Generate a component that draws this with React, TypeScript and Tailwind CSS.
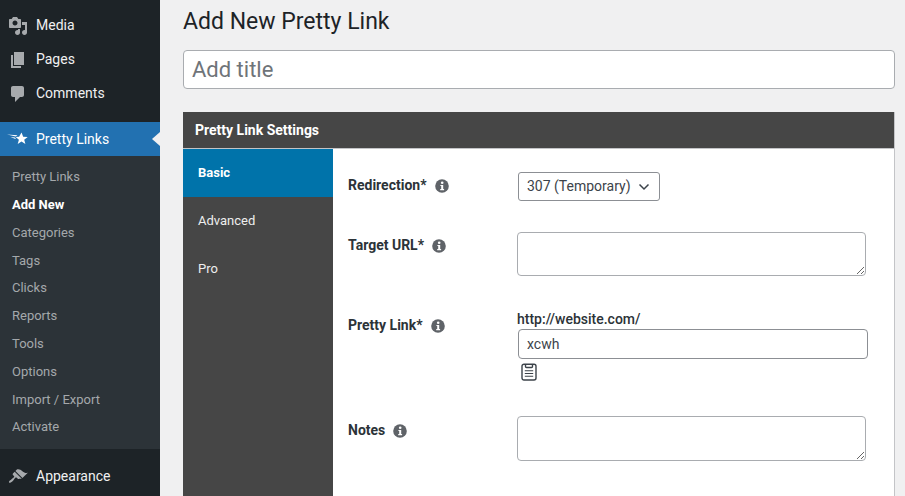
import * as React from 'react'
import type { ReactNode } from 'react'

const InfoIcon = () => (
    <svg viewBox="0 0 14 14" className="h-[14px] w-[14px] shrink-0">
        <circle cx="7" cy="7" r="6.8" fill="#5f6368" />
        <circle cx="7.200" cy="3.700" r="1.300" fill="#fff" />
        <path d="M5.400 6h2.800v4.100h.9v1.100H5.200v-1.100h1V7.100h-.8z" fill="#fff" />
    </svg>
)

const MediaIcon = () => (
    <svg viewBox="0 0 20 20" className="h-5 w-5" fill="#a7aaad">
        <path d="M13 11V4c0-.55-.45-1-1-1h-1.670L9 1H5L3.670 3H2c-.55 0-1 .45-1 1v7c0 .55.45 1 1 1h10c.55 0 1-.45 1-1zM7 4.500c1.380 0 2.500 1.120 2.500 2.500S8.380 9.500 7 9.500 4.500 8.380 4.500 7 5.620 4.500 7 4.500zM14 6h5v10.500c0 1.380-1.120 2.500-2.500 2.500S14 17.880 14 16.500s1.120-2.500 2.500-2.500c.17 0 .34.020.5.050V9h-3V6zm-4 8.050V13h2v3.500c0 1.380-1.120 2.500-2.500 2.500S7 17.880 7 16.500 8.120 14 9.500 14c.17 0 .34.020.5.050z" />
    </svg>
)

const PagesIcon = () => (
    <svg viewBox="0 0 20 20" className="h-5 w-5" fill="#a7aaad">
        <path d="M6 15V2h10v13H6zm-1 1h8v2H3V5h2v11z" />
    </svg>
)

const CommentsIcon = () => (
    <svg viewBox="0 0 20 20" className="h-5 w-5" fill="#a7aaad">
        <path d="M5 2h9c1.100 0 2 .9 2 2v7c0 1.100-.9 2-2 2h-2l-5 5v-5H5c-1.100 0-2-.9-2-2V4c0-1.100.9-2 2-2z" />
    </svg>
)

const PrettyLinksIcon = () => (
    <svg viewBox="0 0 22 14" className="h-[14px] w-[22px]" fill="#fff">
        <path d="M14.500.5l1.700 4.200 4.500.2-3.500 2.800 1.200 4.400-3.900-2.500-3.800 2.500 1.200-4.400L8.700 5l3.400-.2z" />
        <path d="M0 2.500l10.500.8-1.700 1.200zM3.500 5l4.400.4.800.9-.2.800z" />
    </svg>
)

const AppearanceIcon = () => (
    <svg viewBox="0 0 20 20" className="h-5 w-5" fill="#a7aaad">
        <path d="M14.480 11.060L7.410 3.990l1.500-1.500c.5-.56 2.300-.47 3.510.32 1.210.8 1.430 1.280 2.910 2.100 1.180.64 2.450 1.260 4.450.85zm-.71.71L6.700 4.700 4.930 6.470c-.39.39-.39 1.020 0 1.410l1.060 1.060c.39.39.39 1.030 0 1.420-.6.6-1.430 1.110-2.210 1.690-.35.26-.7.53-1.010.84C1.430 13.230.5 15 1.090 15.590c.59.59 2.360-.34 3.700-1.680.31-.31.58-.66.84-1.010.58-.78 1.090-1.610 1.690-2.210.39-.39 1.030-.39 1.420 0l1.060 1.060c.39.39 1.020.39 1.410 0z" />
    </svg>
)

const ClipboardIcon = () => (
    <svg viewBox="0 0 16 18" className="h-[18px] w-4" fill="none" stroke="#3c434a" strokeWidth="1.400">
        <rect x="1" y="1.200" width="14" height="15.800" rx="2" />
        <path d="M4.500 1.200v2.300a1 1 0 0 0 1 1h5a1 1 0 0 0 1-1V1.200" />
        <path d="M3.800 7.800h8.400M3.800 10.500h8.400M3.800 13.200h8.400" strokeWidth="1.100" />
    </svg>
)

const MenuRow = ({ icon, label }: { icon: ReactNode; label: string }) => (
    <div className="flex h-[34px] items-center text-[14px] text-[#f0f0f1]">
        <span className="flex w-[36px] justify-center">{icon}</span>
        <span>{label}</span>
    </div>
)

const SUBMENU = ['Pretty Links', 'Add New', 'Categories', 'Tags', 'Clicks', 'Reports', 'Tools', 'Options', 'Import / Export', 'Activate']

const Label = ({ text }: { text: string }) => (
    <div className="flex w-[170px] shrink-0 items-center gap-[8px] text-[14px] font-bold text-[#2c3338]">
        <span>{text}</span>
        <InfoIcon />
    </div>
)

export default function App() {
    return (
        <div className="flex h-[496px] w-[905px] overflow-hidden bg-[#f0f0f1] font-['Roboto',sans-serif]">
            {/* admin menu */}
            <aside className="flex w-[160px] shrink-0 flex-col bg-[#1d2327] pt-[8.500px]">
                <MenuRow icon={<MediaIcon />} label="Media" />
                <MenuRow icon={<PagesIcon />} label="Pages" />
                <MenuRow icon={<CommentsIcon />} label="Comments" />
                <div className="relative mt-[11.500px] flex h-[34px] items-center bg-[#2271b1] text-[14px] text-white">
                    <span className="flex w-[36px] justify-center">
                        <PrettyLinksIcon />
                    </span>
                    <span>Pretty Links</span>
                    <span className="absolute right-0 top-[10px] h-0 w-0 border-y-[7px] border-r-[8px] border-y-transparent border-r-[#f0f0f1]" />
                </div>
                <div className="bg-[#2c3338] pb-[8px] pt-[7px]">
                    {SUBMENU.map((item) => (
                        <div
                            key={item}
                            className={
                                item === 'Add New'
                                    ? 'flex h-[27.800px] items-center pl-3 text-[13px] font-bold text-white'
                                    : 'flex h-[27.800px] items-center pl-3 text-[13px] text-[#a4a8ab]'
                            }
                        >
                            {item}
                        </div>
                    ))}
                </div>
                <div className="pt-[11px]">
                    <MenuRow icon={<AppearanceIcon />} label="Appearance" />
                </div>
            </aside>

            {/* content */}
            <main className="flex min-w-0 flex-1 flex-col pl-[23px] pr-[10px]">
                <h1 className="mt-[7px] h-[30px] text-[23px] leading-[30px] text-[#1d2327]">Add New Pretty Link</h1>
                <input
                    placeholder="Add title"
                    className="mt-[13px] h-[39px] w-[712px] rounded-[4px] border border-[#a9acb0] bg-white px-[8px] text-[22px] placeholder:text-[#6f7479]"
                />
                <section className="mt-[23px] flex w-[712px] flex-1 flex-col border-r border-[#c3c4c7]">
                    <div className="flex h-[37px] shrink-0 items-center border-b border-[#c3c4c7] bg-[#464646] pl-3 text-[14px] font-bold text-white">
                        Pretty Link Settings
                    </div>
                    <div className="flex flex-1">
                        <div className="w-[150px] shrink-0 bg-[#464646] text-[13px]">
                            <div className="flex h-[48px] items-center bg-[#0073aa] pl-[15px] font-bold text-white">Basic</div>
                            <div className="flex h-[48px] items-center pl-[15px] text-[#eeeeee]">Advanced</div>
                            <div className="flex h-[48px] items-center pl-[15px] text-[#eeeeee]">Pro</div>
                        </div>
                        <div className="flex-1 bg-white pl-[15px] pt-[23px]">
                            <div className="flex h-[29px] items-start">
                                <div className="pt-[3px]">
                                    <Label text="Redirection*" />
                                </div>
                                <div className="flex h-[29px] w-[142px] items-center justify-between rounded-[3px] border border-[#8c8f94] pl-2 pr-[9px] text-[14px] text-[#3c434a]">
                                    <span>307 (Temporary)</span>
                                    <svg viewBox="0 0 12 8" className="h-2 w-3" fill="none" stroke="#3c434a" strokeWidth="1.500">
                                        <path d="M1.500 1.500L6 6l4.500-4.500" />
                                    </svg>
                                </div>
                            </div>

                            <div className="mt-[31px] flex h-[44px] items-start">
                                <div className="pt-[3px]">
                                    <Label text="Target URL*" />
                                </div>
                                <textarea className="ml-[-1px] h-[44px] w-[349px] rounded-[4px] border border-[#a9acb0] bg-white" />
                            </div>

                            <div className="mt-[36px] flex items-start">
                                <div className="pt-[3px]">
                                    <Label text="Pretty Link*" />
                                </div>
                                <div className="ml-[-1px]">
                                    <div className="h-[17px] text-[14px] font-medium leading-[15px] text-[#2c3338]">http://website.com/</div>
                                    <input
                                        defaultValue="xcwh"
                                        className="ml-[1px] block h-[30px] w-[350px] rounded-[4px] border border-[#8c8f94] bg-white px-2 text-[14px] text-[#3c434a]"
                                    />
                                    <div className="ml-[4px] mt-[4px]">
                                        <ClipboardIcon />
                                    </div>
                                </div>
                            </div>

                            <div className="mt-[35px] flex items-start">
                                <div className="pt-[4px]">
                                    <Label text="Notes" />
                                </div>
                                <textarea className="ml-[-1px] h-[45px] w-[349px] rounded-[4px] border border-[#a9acb0] bg-white" />
                            </div>
                        </div>
                    </div>
                </section>
            </main>
        </div>
    )
}
